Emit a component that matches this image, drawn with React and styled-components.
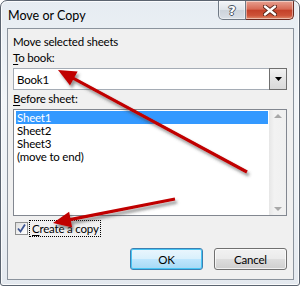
import React from 'react'
import styled, { createGlobalStyle } from 'styled-components'

const GlobalStyle = createGlobalStyle`
  html, body {
    margin: 0;
    padding: 0;
    background: #ffffff;
  }
  body {
    font-family: Lato, "Open Sans", "Liberation Sans", sans-serif;
    font-size: 11.5px;
    letter-spacing: -0.2px;
    color: #000;
  }
`

const Window = styled.div`
  position: relative;
  box-sizing: border-box;
  width: 300px;
  height: 286px;
  border: 1px solid #5b6470;
  border-radius: 7px 7px 3px 3px;
  background: linear-gradient(180deg, #e6ecf2 0%, #f2f5f8 35%, #edf1f5 70%, #e4e9ef 100%);
  box-shadow: inset 0 0 0 1px rgba(255, 255, 255, 0.8);
  display: flex;
  flex-direction: column;
  overflow: hidden;
`

const TitleBar = styled.div`
  height: 28px;
  display: flex;
  align-items: flex-start;
  padding-left: 7px;
`

const Title = styled.div`
  margin-top: 7px;
  font-size: 12.5px;
  letter-spacing: 0;
  line-height: 16px;
  color: #000;
`

const Caption = styled.div`
  margin-left: auto;
  margin-right: 5px;
  display: flex;
`

const CaptionButton = styled.div`
  box-sizing: border-box;
  width: ${p => p.$w}px;
  height: 19px;
  display: flex;
  align-items: center;
  justify-content: center;
  border: 1px solid ${p => (p.$close ? '#6b2a20' : '#6f7985')};
  border-top: none;
  border-radius: ${p => (p.$close ? '0 0 5px 0' : '0 0 0 5px')};
  border-left: ${p => (p.$close ? 'none' : '')};
  background: ${p =>
    p.$close
      ? 'linear-gradient(180deg, #e7a191 0%, #d76a55 45%, #c4412a 52%, #cd5238 80%, #e08a6c 100%)'
      : 'linear-gradient(180deg, #f3f5f8 0%, #dfe4ea 48%, #ccd3db 52%, #d9dfe6 100%)'};
  box-shadow: inset 0 0 0 1px rgba(255, 255, 255, 0.45);
`

const HelpGlyph = styled.span`
  font-family: "DejaVu Sans", sans-serif;
  font-weight: bold;
  font-size: 13px;
  line-height: 13px;
  color: #fff;
  text-shadow: 1px 0 0 #4a5563, -1px 0 0 #4a5563, 0 1px 0 #4a5563, 0 -1px 0 #4a5563;
`

const Client = styled.div`
  flex: 1;
  margin: 0 5px 5px 6px;
  border: 1px solid #8b939d;
  background: #f0f0f0;
  padding: 5px 6px 9px 5px;
  display: flex;
  flex-direction: column;
`

const Label = styled.div`
  line-height: 16px;
  height: 16px;
  margin-bottom: ${p => p.$mb || 0}px;
  white-space: nowrap;
`

const Key = styled.span`
  text-decoration: underline;
  text-underline-offset: 2px;
`

const Combo = styled.div`
  box-sizing: border-box;
  height: 22px;
  border: 1px solid #a5acb5;
  background: #fff;
  display: flex;
  align-items: stretch;
  margin-bottom: 1px;
`

const ComboText = styled.div`
  flex: 1;
  padding-left: 3px;
  display: flex;
  align-items: center;
`

const ComboButton = styled.div`
  box-sizing: border-box;
  width: 18px;
  height: 22px;
  margin: -1px -1px 0 0;
  border: 1px solid #6f6f6f;
  background: linear-gradient(180deg, #f2f2f2 0%, #e4e4e4 50%, #d9d9d9 100%);
  display: flex;
  align-items: center;
  justify-content: center;
`

const ListBox = styled.div`
  box-sizing: border-box;
  height: 107px;
  border: 1px solid #828790;
  background: #fff;
  display: flex;
  margin-bottom: 4px;
`

const Items = styled.div`
  flex: 1;
  padding: 1px 1px 0 2px;
`

const Item = styled.div`
  height: 13px;
  line-height: 13px;
  padding-left: 1px;
  background: ${p => (p.$selected ? '#3399ff' : 'transparent')};
  color: ${p => (p.$selected ? '#fff' : '#000')};
  white-space: nowrap;
`

const ScrollBar = styled.div`
  width: 17px;
  background: linear-gradient(90deg, #e6e6e6 0%, #f2f2f2 30%, #f0f0f0 100%);
  display: flex;
  flex-direction: column;
  justify-content: space-between;
  align-items: center;
  padding: 4px 0;
  box-sizing: border-box;
`

const ScrollArrow = styled.div`
  width: 0;
  height: 0;
  border-left: 4px solid transparent;
  border-right: 4px solid transparent;
  ${p => (p.$down ? 'border-top: 4px solid #a8a8a8;' : 'border-bottom: 4px solid #a8a8a8;')}
`

const CheckRow = styled.div`
  height: 17px;
  display: flex;
  align-items: center;
  padding-left: 2px;
  margin-bottom: 11px;
`

const CheckBox = styled.div`
  box-sizing: border-box;
  width: 13px;
  height: 13px;
  border: 1px solid #8e8f8f;
  background: linear-gradient(135deg, #dcdcdc 0%, #f4f4f4 60%, #ffffff 100%);
  display: flex;
  align-items: center;
  justify-content: center;
  margin-right: 1px;
`

const CheckLabel = styled.div`
  border: 1px dotted #000;
  padding: 0 1px 0 2px;
  line-height: 15px;
  white-space: nowrap;
`

const ButtonRow = styled.div`
  margin-top: auto;
  display: flex;
  justify-content: flex-end;
  gap: 11px;
`

const Button = styled.div`
  box-sizing: border-box;
  width: 73px;
  height: 22px;
  border: 1px solid ${p => (p.$default ? '#3c7fb1' : '#707070')};
  border-radius: 3px;
  background: ${p =>
    p.$default
      ? 'linear-gradient(180deg, #eaf6fd 0%, #d9f0fc 48%, #bee6fd 52%, #a7d9f5 100%)'
      : 'linear-gradient(180deg, #f2f2f2 0%, #ebebeb 48%, #dddddd 52%, #cfcfcf 100%)'};
  box-shadow: inset 0 0 0 1px ${p => (p.$default ? '#48c6f5' : 'rgba(255,255,255,0.7)')};
  display: flex;
  align-items: center;
  justify-content: center;
`

const Overlay = styled.svg`
  position: absolute;
  left: -1px;
  top: -1px;
  pointer-events: none;
`

function Arrow({ x1, y1, x2, y2 }) {
  const dx = x2 - x1
  const dy = y2 - y1
  const len = Math.hypot(dx, dy)
  const ux = dx / len
  const uy = dy / len
  const hl = 18
  const hw = 8
  const bx = x2 - ux * hl
  const by = y2 - uy * hl
  const px = -uy
  const py = ux
  const pts = `${x2},${y2} ${bx + px * hw},${by + py * hw} ${bx - px * hw},${by - py * hw}`
  return (
    <g filter="url(#shadow)">
      <line x1={x1} y1={y1} x2={bx + ux * 2} y2={by + uy * 2} stroke="#c00000" strokeWidth="3.2" />
      <polygon points={pts} fill="#c00000" />
    </g>
  )
}

export default function App() {
  return (
    <>
      <GlobalStyle />
      <Window>
        <TitleBar>
          <Title>Move or Copy</Title>
          <Caption>
            <CaptionButton $w={28}>
              <HelpGlyph>?</HelpGlyph>
            </CaptionButton>
            <CaptionButton $w={48} $close>
              <svg width="14" height="11" viewBox="0 0 14 11">
                <path d="M2 1.5 L12 9.5 M12 1.5 L2 9.5" stroke="#5a2419" strokeWidth="4.2" strokeLinecap="round" />
                <path d="M2 1.5 L12 9.5 M12 1.5 L2 9.5" stroke="#ffffff" strokeWidth="2.4" strokeLinecap="round" />
              </svg>
            </CaptionButton>
          </Caption>
        </TitleBar>
        <Client>
          <Label>Move selected sheets</Label>
          <Label $mb={2}>
            <Key>T</Key>o book:
          </Label>
          <Combo>
            <ComboText>Book1</ComboText>
            <ComboButton>
              <svg width="7" height="4" viewBox="0 0 7 4">
                <path d="M0 0 H7 L3.5 4 Z" fill="#000" />
              </svg>
            </ComboButton>
          </Combo>
          <Label $mb={2}>
            <Key>B</Key>efore sheet:
          </Label>
          <ListBox>
            <Items>
              <Item $selected>Sheet1</Item>
              <Item>Sheet2</Item>
              <Item>Sheet3</Item>
              <Item>(move to end)</Item>
            </Items>
            <ScrollBar>
              <ScrollArrow />
              <ScrollArrow $down />
            </ScrollBar>
          </ListBox>
          <CheckRow>
            <CheckBox>
              <svg width="9" height="9" viewBox="0 0 9 9">
                <path d="M1 4.5 L3.5 7.5 L8 0.5" fill="none" stroke="#3e5592" strokeWidth="1.8" />
              </svg>
            </CheckBox>
            <CheckLabel>
              <Key>C</Key>reate a copy
            </CheckLabel>
          </CheckRow>
          <ButtonRow>
            <Button $default>OK</Button>
            <Button>Cancel</Button>
          </ButtonRow>
        </Client>
        <Overlay width="300" height="286" viewBox="0 0 300 286">
          <defs>
            <filter id="shadow" x="-20%" y="-20%" width="140%" height="140%">
              <feDropShadow dx="2" dy="3" stdDeviation="1.6" floodColor="#404040" floodOpacity="0.55" />
            </filter>
          </defs>
          <Arrow x1={247} y1={172} x2={58} y2={70} />
          <Arrow x1={175} y1={199} x2={53} y2={223} />
        </Overlay>
      </Window>
    </>
  )
}
